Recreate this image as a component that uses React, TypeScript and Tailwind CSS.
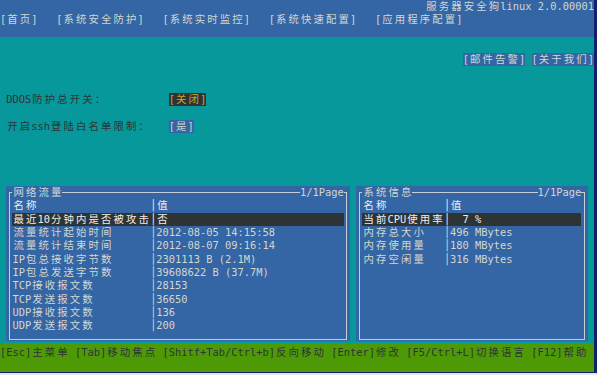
const isWide = (ch: string) => (ch.codePointAt(0) ?? 0) >= 0x2e80;

// one terminal cell per char, two for CJK
function Cells({ text }: { text: string }) {
  return (
    <>
      {Array.from(text).map((ch, i) =>
        isWide(ch) ? (
          <span key={i} className="inline-block w-[12.5px] shrink-0 text-center">
            {ch}
          </span>
        ) : (
          <span key={i} className="inline-block w-[6.25px] shrink-0 text-center">
            {ch === ' ' ? '\u00a0' : ch}
          </span>
        ),
      )}
    </>
  );
}

function Row({ children, className = '' }: { children: React.ReactNode; className?: string }) {
  return <div className={'flex h-[13.3px] shrink-0 items-center leading-[13.3px] ' + className}>{children}</div>;
}

type Item = [string, string];

function Panel({
	title,
	rows,
	width,
	nameWidth,
}: {
	title: string;
	rows: Item[];
	width: string;
	nameWidth: string;
}) {
	return (
		<div className={'flex h-[155.3px] shrink-0 flex-col bg-[#3465a4] ' + width}>
			<div className="mx-[2.6px] mt-[6.15px] flex h-[147.8px] flex-col border border-[#c9cdd6] px-[2.65px]">
				{/* title sits on the top line */}
				<Row className="-mt-[7.15px] justify-between text-[#d3d7cf]">
					<span className="flex bg-[#3465a4]">
						<Cells text={title} />
					</span>
					<span className="flex bg-[#3465a4]">
						<Cells text="1/1Page" />
					</span>
				</Row>
				<Row className="text-[#eeeeec]">
					<div className={'flex shrink-0 ' + nameWidth}>
						<Cells text="名称" />
					</div>
					<Cells text="│" />
					<Cells text="值" />
				</Row>
				{rows.map(([name, value], i) => (
					<Row key={name} className={i === 0 ? 'bg-[#2e3436] text-[#eeeeec]' : 'text-[#d3d7cf]'}>
						<div className={'flex shrink-0 ' + nameWidth}>
							<Cells text={name} />
						</div>
						<Cells text="│" />
						<Cells text={value} />
					</Row>
				))}
			</div>
		</div>
	);
}

const traffic: Item[] = [
	['最近10分钟内是否被攻击', '否'],
	['流量统计起始时间', '2012-08-05 14:15:58'],
	['流量统计结束时间', '2012-08-07 09:16:14'],
	['IP包总接收字节数', '2301113 B (2.1M)'],
	['IP包总发送字节数', '39608622 B (37.7M)'],
	['TCP接收报文数', '28153'],
	['TCP发送报文数', '36650'],
	['UDP接收报文数', '136'],
	['UDP发送报文数', '200'],
];

const sysinfo: Item[] = [
	['当前CPU使用率', '  7 %'],
	['内存总大小', '496 MBytes'],
	['内存使用量', '180 MBytes'],
	['内存空闲量', '316 MBytes'],
];

export default function App() {
	return (
		<div className="h-[375px] w-[597px] overflow-hidden bg-[#e4e6ee] font-['DejaVu_Sans_Mono','Noto_Sans_CJK_SC',monospace] text-[10.4px]">
			<div className="flex h-[373px] w-[597px] flex-col border-r-[3px] border-b border-[#14206a]">
				{/* top menu */}
				<div className="flex h-[37px] shrink-0 flex-col bg-[#3465a4] text-[#d3d7cf]">
					<Row className="justify-end">
						<Cells text="服务器安全狗linux 2.0.00001" />
					</Row>
					<Row>
						<Cells text="[首页]   [系统安全防护]   [系统实时监控]   [系统快速配置]   [应用程序配置]" />
					</Row>
				</div>

				{/* main */}
				<div className="flex h-[306px] shrink-0 flex-col bg-[#06989a] pt-[16.2px] text-[#2e3436]">
					<Row className="justify-end text-[#d3d7cf]">
						<span className="flex bg-[#3465a4]">
							<Cells text="[邮件告警]" />
						</span>
						<Cells text=" " />
						<span className="flex bg-[#3465a4]">
							<Cells text="[关于我们]" />
						</span>
					</Row>
					<div className="h-[26.6px] shrink-0" />
					<Row>
						<Cells text=" DDOS防护总开关：          " />
						<span className="flex bg-[#2e3436] text-[#d8a020]">
							<Cells text="[关闭]" />
						</span>
					</Row>
					<div className="h-[13.3px] shrink-0" />
					<Row>
						<Cells text=" 开启ssh登陆白名单限制：   " />
						<span className="flex bg-[#3465a4] text-[#d3d7cf]">
							<Cells text="[是]" />
						</span>
					</Row>
					<div className="h-[53.2px] shrink-0" />
					<div className="flex gap-[6.25px] pl-[6.25px]">
						<Panel title="网络流量" rows={traffic} width="w-[343.75px]" nameWidth="w-[137.5px]" />
						<Panel title="系统信息" rows={sysinfo} width="w-[231.25px]" nameWidth="w-[81.25px]" />
					</div>
				</div>

				{/* key help */}
				<div className="flex flex-1 flex-col bg-[#4e9a06] pt-[2.8px] text-[#2e3436]">
					<Row>
						<Cells text="[Esc]主菜单 [Tab]移动焦点 [Shitf+Tab/Ctrl+b]反向移动 [Enter]修改 [F5/Ctrl+L]切换语言 [F12]帮助" />
					</Row>
				</div>
			</div>
		</div>
	);
}
